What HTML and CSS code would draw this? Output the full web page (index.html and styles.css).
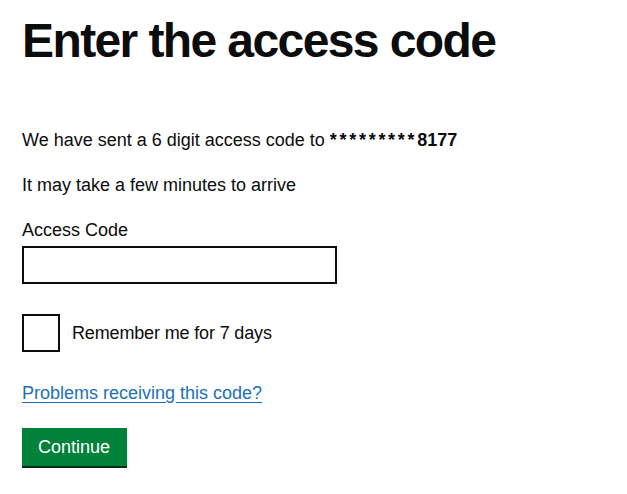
FILE: index.html
```html
<!DOCTYPE html>
<html lang="en">
<head>
<meta charset="utf-8">
<title>Enter the access code</title>
<link rel="stylesheet" href="styles.css">
</head>
<body>
<main class="page">
  <h1 class="heading">Enter the access code</h1>
  <p class="body">We have sent a 6 digit access code to <strong class="masked"><span class="stars">*********</span>8177</strong></p>
  <p class="body">It may take a few minutes to arrive</p>
  <div class="form-group">
    <label class="label" for="code">Access Code</label>
    <input class="input" id="code" type="text">
  </div>
  <div class="checkbox-row">
    <input class="checkbox" id="remember" type="checkbox">
    <label class="checkbox-label" for="remember">Remember me for 7 days</label>
  </div>
  <p class="link-row"><a class="link" href="#">Problems receiving this code?</a></p>
  <button class="button" type="button">Continue</button>
</main>
</body>
</html>
```
FILE: styles.css
```css
html, body {
  margin: 0;
  padding: 0;
  background: #ffffff;
}
.page {
  padding: 16px 22px;
  font-family: "Liberation Sans", Arial, sans-serif;
  color: #0b0c0c;
}
.heading {
  margin: 0 0 62px;
  font-size: 48px;
  line-height: 50px;
  font-weight: 700;
  letter-spacing: -1.6px;
}
.body {
  margin: 0 0 20px;
  font-size: 18px;
  line-height: 25px;
}
.masked {
  font-weight: 700;
}
.stars {
  letter-spacing: 2.7px;
}
.form-group {
  display: flex;
  flex-direction: column;
  align-items: flex-start;
  margin-bottom: 30px;
}
.label {
  font-size: 18px;
  line-height: 25px;
  margin-bottom: 3px;
}
.input {
  box-sizing: border-box;
  width: 315px;
  height: 38px;
  margin: 0;
  border: 2px solid #0b0c0c;
  border-radius: 0;
  padding: 5px;
  font: inherit;
  font-size: 18px;
}
.checkbox-row {
  display: flex;
  align-items: center;
  gap: 12px;
  margin-bottom: 29px;
}
.checkbox {
  appearance: none;
  -webkit-appearance: none;
  box-sizing: border-box;
  width: 38px;
  height: 38px;
  margin: 0;
  border: 2px solid #0b0c0c;
  background: #fff;
}
.checkbox-label {
  font-size: 18px;
  line-height: 25px;
  letter-spacing: -0.15px;
}
.link-row {
  margin: 0 0 22px;
  font-size: 18px;
  line-height: 25px;
}
.link {
  color: #1d70b8;
  text-decoration: underline;
  text-underline-offset: 3px;
}
.button {
  display: inline-flex;
  align-items: center;
  box-sizing: border-box;
  height: 38px;
  margin: 0;
  padding: 0 17px 0 16px;
  border: 0;
  border-radius: 0;
  background: #00823b;
  color: #ffffff;
  font-family: "Liberation Sans", Arial, sans-serif;
  font-size: 18px;
  box-shadow: 0 2px 0 #002d18;
  cursor: pointer;
}
```
